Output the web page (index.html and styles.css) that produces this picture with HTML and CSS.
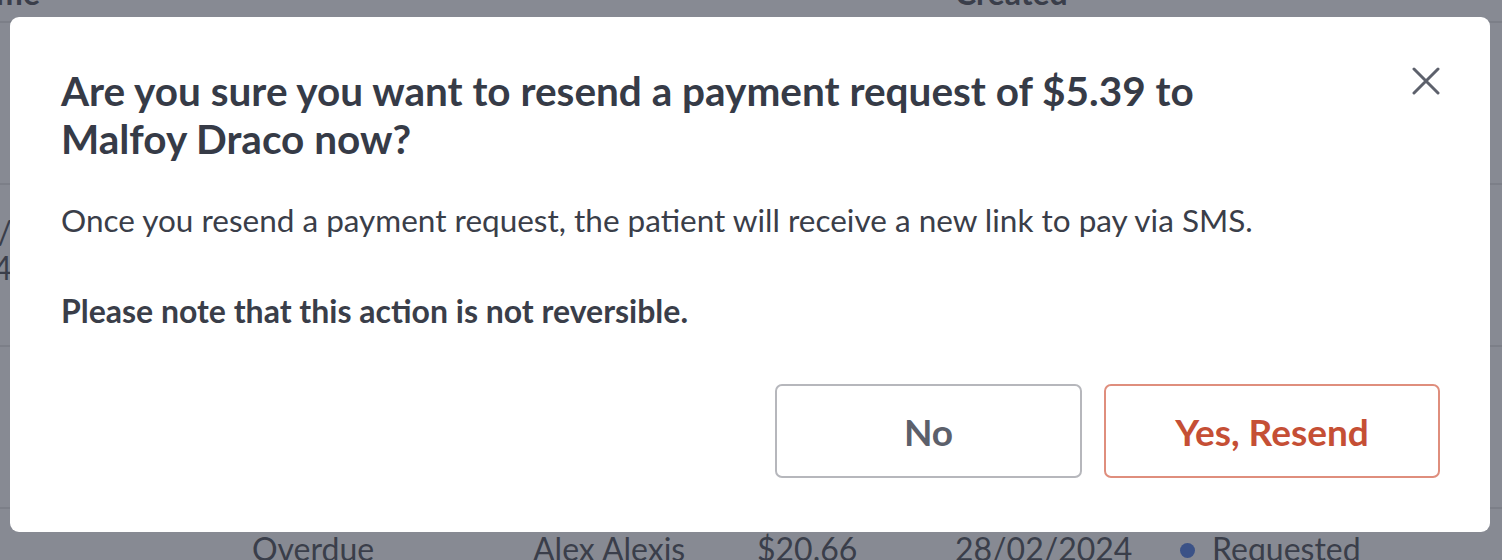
FILE: index.html
```html
<!DOCTYPE html>
<html lang="en">
<head>
<meta charset="utf-8">
<title>Resend payment request</title>
<link rel="stylesheet" href="styles.css">
</head>
<body>
<div class="page">
  <div class="table">
    <div class="row head">
      <div class="cell c0">Name</div>
      <div class="cell c4">Created</div>
    </div>
    <div class="row">
      <div class="cell c0"></div>
    </div>
    <div class="row">
      <div class="cell c0">12/02/<br>2024</div>
    </div>
    <div class="row">
      <div class="cell c0"></div>
    </div>
    <div class="row last">
      <div class="cell c1">Overdue</div>
      <div class="cell c2">Alex Alexis</div>
      <div class="cell c3">$20.66</div>
      <div class="cell c4">28/02/2024</div>
      <div class="cell c5"><span class="dot"></span>Requested</div>
    </div>
  </div>
</div>

<div class="modal" role="dialog" aria-modal="true">
  <div class="modal-head">
    <h2 class="modal-title">Are you sure you want to resend a payment request of $5.39 to Malfoy Draco now?</h2>
    <button class="close" aria-label="Close">
      <svg width="28" height="28" viewBox="0 0 28 28"><path d="M2 2 L26 26 M26 2 L2 26" stroke="#5d616c" stroke-width="3" stroke-linecap="round" fill="none"/></svg>
    </button>
  </div>
  <p class="modal-text">Once you resend a payment request, the patient will receive a new link to pay via SMS.</p>
  <p class="modal-text strong">Please note that this action is not reversible.</p>
  <div class="actions">
    <button class="btn btn-no">No</button>
    <button class="btn btn-yes">Yes, Resend</button>
  </div>
</div>
</body>
</html>
```

FILE: styles.css
```css
* { box-sizing: border-box; }
html, body { margin: 0; padding: 0; }
body {
  background: #878a93;
  font-family: Lato, "Noto Sans", sans-serif;
  width: 1502px;
  height: 560px;
  overflow: hidden;
  position: relative;
}
.page { margin-top: -32px; margin-left: -120px; }
.table { display: flex; flex-direction: column; }
.row {
  display: grid;
  grid-template-columns: 132px 240px 281px 224px 198px 225px 322px;
  height: 162px;
  border-bottom: 2px solid #7c7f88;
  align-items: center;
  color: #3a3e4a;
  font-size: 32px;
  line-height: 36px;
}
.row.head { height: 55px; font-weight: 700; align-items: start; padding-top: 7px; }
.row.last { align-items: start; padding-top: 22px; }
.cell { white-space: nowrap; }
.c0 { grid-column: 1; text-align: right; margin-top: -30px; }
.head .c0 { margin-top: 0; margin-right: -28px; }
.c1 { grid-column: 3; }
.c2 { grid-column: 4; }
.c3 { grid-column: 5; }
.c4 { grid-column: 6; }
.c5 { grid-column: 7; display: flex; align-items: center; }
.dot {
  display: inline-block;
  width: 15px; height: 15px;
  border-radius: 50%;
  background: #3b5287;
  margin: 2px 17px 0 0;
}

.modal {
  position: absolute;
  left: 10px;
  top: 17px;
  width: 1480px;
  height: 515px;
  background: #fff;
  border-radius: 9px;
  padding: 50px 50px 0 51px;
  color: #363b47;
}
.modal-head { display: flex; justify-content: space-between; align-items: flex-start; }
.modal-title {
  margin: 0;
  font-size: 40.5px;
  line-height: 48px;
  font-weight: 700;
  color: #363b47;
  max-width: 1200px;
}
.close {
  border: 0; background: none; padding: 0;
  width: 28px; height: 28px;
  margin-top: 0;
  display: flex;
}
.modal-text {
  margin: 34px 0 0;
  font-size: 31.5px;
  line-height: 47px;
  color: #3a3e49;
}
.modal-text.strong { font-size: 32px; font-weight: 700; margin-top: 43px; }
.actions {
  display: flex;
  justify-content: flex-end;
  gap: 22px;
  margin-top: 50px;
}
.btn {
  height: 94px;
  border-radius: 7px;
  background: #fff;
  font-family: Lato, "Noto Sans", sans-serif;
  font-weight: 700;
  font-size: 37px;
  padding: 0;
}
.btn-no { width: 307px; border: 2px solid #b6b7bc; color: #5c606b; }
.btn-yes { width: 336px; border: 2px solid #df8e7d; color: #c54f35; }
```
